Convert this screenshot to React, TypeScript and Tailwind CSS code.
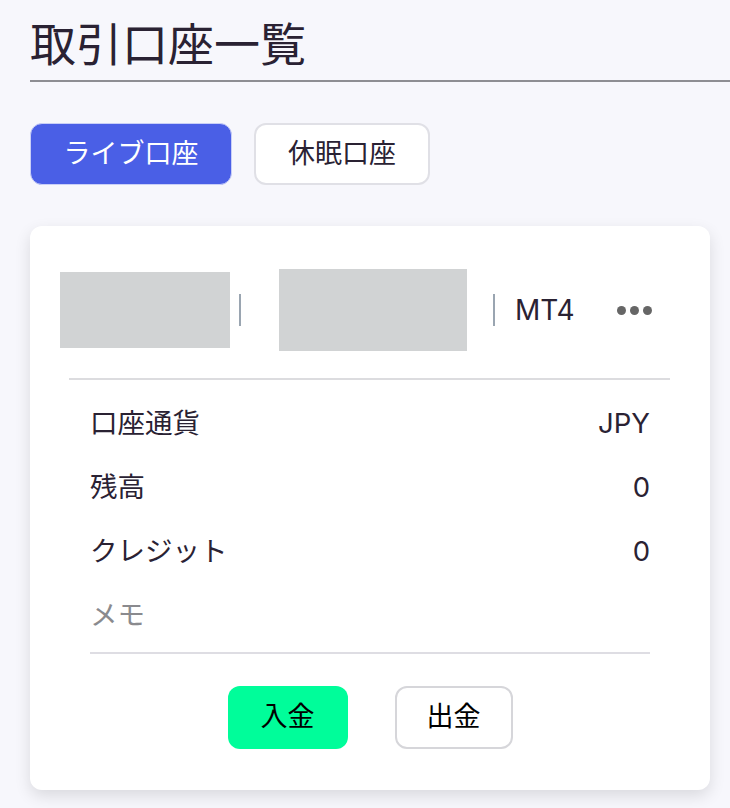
import React from 'react';

const font = { fontFamily: 'Inter, "Noto Sans CJK JP", sans-serif' };

const rows = [
  { label: '口座通貨', value: 'JPY' },
  { label: '残高', value: '0' },
  { label: 'クレジット', value: '0' },
];

export default function App() {
  return (
    <div className="min-h-screen bg-[#f7f7fc] pl-[30px] text-[#2a2233]" style={font}>
      {/* タイトル */}
      <div className="border-b-2 border-[#8e8e93] pt-[16px] pb-[8px]">
        <h1 className="text-[46px] leading-[56px] font-normal">取引口座一覧</h1>
      </div>

      {/* タブ */}
      <div className="mt-[41px] flex gap-[22px]">
        <button className="h-[62px] w-[202px] rounded-[12px] border border-[#c9cff7] bg-[#4a5fe6] text-[27px] text-white">
          ライブ口座
        </button>
        <button className="h-[62px] w-[176px] rounded-[12px] border-2 border-[#e0e0e6] bg-white text-[27px] text-[#2a2233]">
          休眠口座
        </button>
      </div>

      {/* 口座カード */}
      <div className="mt-[41px] mr-[20px] rounded-[12px] bg-white pt-[43px] pb-[41px] shadow-[0_6px_16px_rgba(0,0,0,0.12)]">
        <div className="flex h-[82px] items-center pl-[30px]">
          <div className="h-[76px] w-[170px] bg-[#d1d3d4]" />
          <div className="ml-[9px] h-[32px] w-[2px] bg-[#9aa5b1]" />
          <div className="ml-[38px] h-[82px] w-[188px] bg-[#d1d3d4]" />
          <div className="ml-[26px] h-[32px] w-[2px] bg-[#9aa5b1]" />
          <span className="ml-[20px] text-[28px]">MT4</span>
          <div className="ml-[42px] flex gap-[4px]">
            <span className="h-[9px] w-[9px] rounded-full bg-[#666]" />
            <span className="h-[9px] w-[9px] rounded-full bg-[#666]" />
            <span className="h-[9px] w-[9px] rounded-full bg-[#666]" />
          </div>
        </div>
        <div className="mt-[27px] ml-[39px] mr-[40px] h-[2px] bg-[#dcdcdf]" />

        <div className="mx-[60px] mt-[12px]">
          {rows.map((r) => (
            <div key={r.label} className="flex h-[64px] items-center justify-between text-[27.5px]">
              <span>{r.label}</span>
              <span>{r.value}</span>
            </div>
          ))}
          <div className="flex h-[64px] items-center text-[27.5px] text-[#8a8a8e]">メモ</div>
          <div className="mt-[4px] h-[2px] bg-[#dedde3]" />
        </div>

        <div className="mt-[32px] flex justify-center gap-[47px]">
          <button className="h-[63px] w-[120px] rounded-[12px] bg-[#00fd9a] text-[27px] text-black">入金</button>
          <button className="h-[63px] w-[118px] rounded-[12px] border-2 border-[#d6d6da] bg-white text-[27px] text-black">
            出金
          </button>
        </div>
      </div>
      <div className="h-[20px]" />
    </div>
  );
}
